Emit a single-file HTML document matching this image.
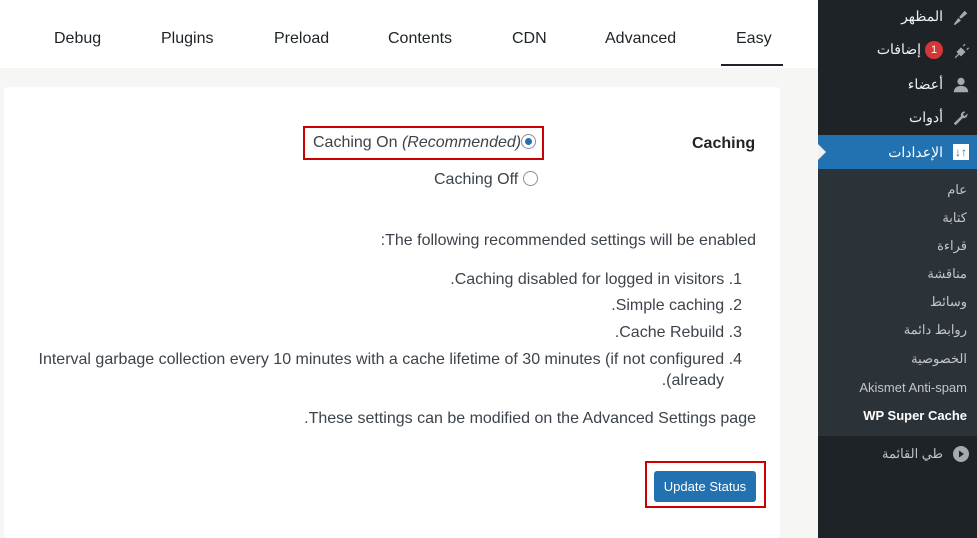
<!DOCTYPE html>
<html><head><meta charset="utf-8"><style>
*{margin:0;padding:0;box-sizing:border-box}
body{width:977px;height:538px;overflow:hidden;background:#f6f7f4;font-family:"Liberation Sans","Noto Sans CJK SC",sans-serif;color:#1d2327;position:relative}
.a{position:absolute;white-space:nowrap}
#top{position:absolute;left:0;top:0;width:818px;height:68px;background:#fff}
.tab{position:absolute;top:30px;font-size:16px;color:#1d2327}
#card{position:absolute;left:4px;top:87px;width:776px;height:451px;background:#fff;border-radius:4px}
#side{position:absolute;left:818px;top:0;width:159px;height:538px;background:#1d2327}
#sub{position:absolute;left:818px;top:169px;width:159px;height:267px;background:#2c3338}
#act{position:absolute;left:818px;top:135px;width:159px;height:34px;background:#2271b1}
.m{position:absolute;right:34px;font-size:14px;color:#f0f0f1;direction:rtl;white-space:nowrap}
.s{position:absolute;right:10px;font-size:13px;color:#c3c4c7;direction:rtl;white-space:nowrap}
.ic{position:absolute;left:952px;width:18px;height:18px}
.t{font-size:16px;color:#3c434a;direction:rtl}
.radio{display:inline-block;width:15px;height:15px;border:1px solid #8c8f94;border-radius:50%;vertical-align:-2px;position:relative;background:#fff}
.radio.on::after{content:"";position:absolute;left:3px;top:3px;width:7px;height:7px;border-radius:50%;background:#2271b1}
</style></head><body>
<div id="top"></div>
<div class="tab" style="left:54px">Debug</div>
<div class="tab" style="left:161px">Plugins</div>
<div class="tab" style="left:274px">Preload</div>
<div class="tab" style="left:388px">Contents</div>
<div class="tab" style="left:512px">CDN</div>
<div class="tab" style="left:605px">Advanced</div>
<div class="tab" style="left:736px">Easy</div>
<div class="a" style="left:721px;top:64px;width:62px;height:2px;background:#1d2327"></div>
<div id="card"></div>

<div class="a" style="left:692px;top:135px;font-size:16px;font-weight:bold">Caching</div>
<div class="a" style="left:303px;top:126px;width:241px;height:34px;border:2px solid #cc0000"></div>
<div class="a" style="left:313px;top:134px;font-size:16px;color:#3c434a">Caching On <i>(Recommended)</i><span class="radio on"></span></div>
<div class="a" style="left:434px;top:171px;font-size:16px;color:#3c434a">Caching Off <span class="radio"></span></div>

<div class="a t" style="right:221px;top:232px">The following recommended settings will be enabled:</div>
<div class="a t" style="right:235px;top:271px">1. Caching disabled for logged in visitors.</div>
<div class="a t" style="right:235px;top:297px">2. Simple caching.</div>
<div class="a t" style="right:235px;top:324px">3. Cache Rebuild.</div>
<div class="a t" style="right:235px;top:351px">4. Interval garbage collection every 10 minutes with a cache lifetime of 30 minutes (if not configured</div>
<div class="a t" style="right:253px;top:372px">already).</div>
<div class="a t" style="right:221px;top:410px">These settings can be modified on the Advanced Settings page.</div>

<div class="a" style="left:645px;top:461px;width:121px;height:47px;border:2px solid #cc0000"></div>
<div class="a" style="left:654px;top:471px;width:102px;height:31px;background:#2271b1;border-radius:3px;color:#fff;font-size:13px;text-align:center;line-height:31px">Update Status</div>

<div id="side"></div>
<div id="sub"></div>
<div id="act"></div>
<div class="a" style="left:818px;top:144px;width:0;height:0;border-top:8px solid transparent;border-bottom:8px solid transparent;border-left:8px solid #f0f0f1"></div>
<div class="m" style="top:8px">المظهر</div>
<div class="m" style="top:41px"><span style="display:inline-block;background:#d63638;color:#fff;border-radius:9px;font-size:11px;width:18px;height:18px;text-align:center;line-height:18px;margin-left:4px;vertical-align:1px">1</span>إضافات</div>
<div class="m" style="top:76px">أعضاء</div>
<div class="m" style="top:109px">أدوات</div>
<div class="m" style="top:144px;color:#fff">الإعدادات</div>
<svg class="ic" style="top:8px" viewBox="0 0 20 20"><path fill="#a7aaad" d="M2 18l5-7 3 3-7 5zM8 10l6-7 3 3-7 6z"/></svg>
<svg class="ic" style="top:42px" viewBox="0 0 20 20"><path fill="#a7aaad" d="M3 17l4-4-2-2 5-5 5 5-5 5-2-2-4 4zM12 4l2-2 1 1-2 2zM16 8l2-2 1 1-2 2z"/></svg>
<svg class="ic" style="top:76px" viewBox="0 0 20 20"><circle cx="10" cy="6" r="4" fill="#a7aaad"/><path fill="#a7aaad" d="M2 18c0-5 4-7 8-7s8 2 8 7z"/></svg>
<svg class="ic" style="top:109px" viewBox="0 0 20 20"><path fill="#a7aaad" d="M2 16l8-8a4 4 0 015-5l-3 3 2 2 3-3a4 4 0 01-5 5l-8 8z"/></svg>
<div class="a" style="left:953px;top:144px;width:16px;height:16px;background:#fff;color:#2271b1;font-size:12px;font-weight:bold;line-height:16px;text-align:center">↓↑</div>
<div class="s" style="top:182px">عام</div>
<div class="s" style="top:210px">كتابة</div>
<div class="s" style="top:238px">قراءة</div>
<div class="s" style="top:266px">مناقشة</div>
<div class="s" style="top:294px">وسائط</div>
<div class="s" style="top:322px">روابط دائمة</div>
<div class="s" style="top:351px">الخصوصية</div>
<div class="a" style="right:10px;top:380px;font-size:13px;color:#c3c4c7">Akismet Anti-spam</div>
<div class="a" style="right:10px;top:408px;font-size:13px;color:#fff;font-weight:bold">WP Super Cache</div>
<div class="m" style="top:446px;color:#c3c4c7;font-size:13px">طي القائمة</div>
<svg class="a" style="left:953px;top:446px" width="16" height="16" viewBox="0 0 16 16"><circle cx="8" cy="8" r="8" fill="#a7aaad"/><path d="M6 4.5l5 3.5-5 3.5z" fill="#1d2327"/></svg>
</body></html>
